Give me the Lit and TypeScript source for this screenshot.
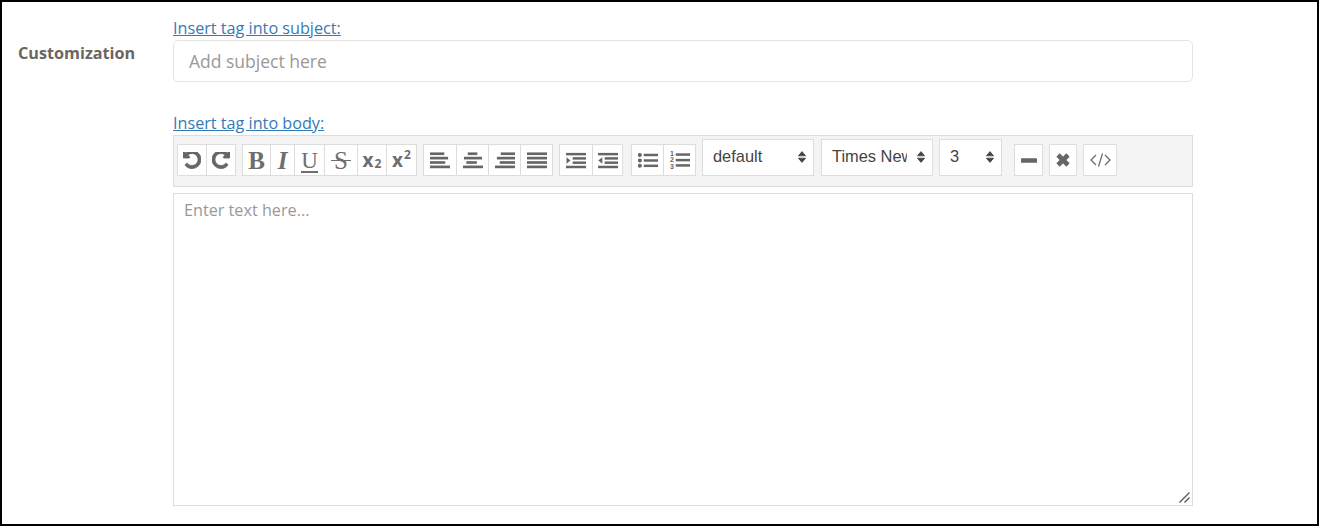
import { LitElement, html, css, svg } from "lit";
import { customElement } from "lit/decorators.js";

const UNDO = "M1536 640q0 156-61 298t-164 245-245 164-298 61q-172 0-327-72.5t-264-204.5q-7-10-6.5-22.5t8.5-20.5l137-138q10-9 25-9 16 2 23 12 73 95 179 147t225 52q104 0 198.5-40.5t163.5-109.5 109.5-163.5 40.5-198.5-40.5-198.5-109.5-163.5-163.5-109.5-198.5-40.5q-98 0-188 35.5t-160 101.5l137 138q31 30 14 69-17 40-59 40h-448q-26 0-45-19t-19-45v-448q0-42 40-59 39-17 69 14l130 129q107-101 244.5-156.5t284.5-55.5q156 0 298 61t245 164 164 245 61 298z";

const bars = (rows: [number, number][], ys = [0, 4.6, 9.2, 13.8]) => html`<svg class="ic" width="20" height="17" viewBox="0 0 21 17">
  ${rows.map(([x, w], i) => svg`<rect x=${x} y=${ys[i]} width=${w} height="2.8"></rect>`)}
</svg>`;

const indent = (left: boolean) => html`<svg class="ic" width="20" height="17" viewBox="0 0 21 17">
  <rect x="0" y="0.5" width="21" height="2.6"></rect>
  <rect x="7" y="5" width="14" height="2.6"></rect>
  <rect x="7" y="9.5" width="14" height="2.6"></rect>
  <rect x="0" y="14" width="21" height="2.6"></rect>
  <path d=${left ? "M4.5 5v7L0.3 8.5z" : "M0.5 5v7L4.7 8.5z"}></path>
</svg>`;

const ul = html`<svg class="ic" width="20" height="17" viewBox="0 0 21 17">
  <circle cx="2" cy="2.6" r="2.1"></circle><circle cx="2" cy="8.5" r="2.1"></circle><circle cx="2" cy="14" r="2.1"></circle>
  <rect x="6" y="1.4" width="15" height="2.6"></rect><rect x="6" y="7.2" width="15" height="2.6"></rect><rect x="6" y="12.8" width="15" height="2.6"></rect>
</svg>`;

const ol = html`<svg class="ic" width="20" height="20" viewBox="0 0 21 20">
  <text x="0" y="6" class="n">1</text><text x="0" y="12.5" class="n">2</text><text x="0" y="19" class="n">3</text>
  <rect x="6" y="3" width="15" height="2.6"></rect><rect x="6" y="8.8" width="15" height="2.6"></rect><rect x="6" y="14.4" width="15" height="2.6"></rect>
</svg>`;

const undo = (flip: boolean) => html`<svg class="ic hist" width="18" height="18" viewBox="0 0 1536 1536"><g transform=${flip ? "translate(1536 0) scale(-1 1)" : ""}><path d=${UNDO}></path></g></svg>`;

const arrows = html`<svg class="arrows" width="8" height="12" viewBox="0 0 8 12"><path d="M4 0.6L7.6 4.8H0.4zM4 11.4L0.4 7.2H7.6z"></path></svg>`;

interface Btn { w: number; c: unknown; }

const groups: { gap: number; items: Btn[] }[] = [
  { gap: 0, items: [
    { w: 30, c: undo(false) },
    { w: 30, c: undo(true) },
  ] },
  { gap: 6, items: [
    { w: 29, c: html`<span class="g b">B</span>` },
    { w: 25, c: html`<span class="g i">I</span>` },
    { w: 31, c: html`<span class="g u">U</span>` },
    { w: 34, c: html`<span class="g s">S</span>` },
    { w: 30, c: html`<span class="x">x<sub>2</sub></span>` },
    { w: 31, c: html`<span class="x">x<sup>2</sup></span>` },
  ] },
  { gap: 6, items: [
    { w: 34, c: bars([[0, 15], [0, 19], [0, 16], [0, 21]]) },
    { w: 33, c: bars([[5, 10], [1, 19], [3.5, 11], [0, 21]]) },
    { w: 33, c: bars([[6, 15], [2, 19], [5, 16], [0, 21]]) },
    { w: 33, c: bars([[0, 21], [0, 21], [0, 21], [0, 21]]) },
  ] },
  { gap: 6, items: [
    { w: 34, c: indent(false) },
    { w: 31, c: indent(true) },
  ] },
  { gap: 8, items: [
    { w: 33, c: ul },
    { w: 33, c: ol },
  ] },
];

const tail: Btn[] = [
  { w: 29, c: html`<svg class="ic" width="16" height="5" viewBox="0 0 16 5"><rect width="16" height="4.4" y="0.3" rx="0.5"></rect></svg>` },
  { w: 28, c: html`<svg class="stroke heavy" width="16" height="16" viewBox="0 0 16 16"><path d="M3 3L13 13M13 3L3 13"></path></svg>` },
  { w: 34, c: html`<svg class="stroke" width="21" height="14" viewBox="0 0 21 14"><path d="M6 2L1 7l5 5M15 2l5 5-5 5M12.5 0.5L8.5 13.5"></path></svg>` },
];

@customElement("app-root")
export class AppRoot extends LitElement {
  static styles = css`
    :host { display: block; font-family: "Open Sans", sans-serif; }
    .frame {
      box-sizing: border-box; width: 1319px; height: 526px; border: 2px solid #000;
      background: #fff; display: flex; padding: 0 0 0 16px;
    }
    .label {
      width: 155px; flex: none; padding-top: 41px; font-size: 16.2px; line-height: 20px;
      font-weight: 700; color: #6b6560;
    }
    .main { width: 1020px; flex: none; display: flex; flex-direction: column; }
    a {
      color: #337ab7; font-size: 16.2px; line-height: 22px; text-decoration: underline; display: block;
    }
    .l1 { margin-top: 15px; height: 23px; }
    .l2 { margin-top: 30px; height: 23px; }
    input {
      box-sizing: border-box; width: 100%; height: 42px; border: 1px solid #e4e4e4; border-radius: 5px;
      padding: 0 15px; font: 17.5px "Open Sans", sans-serif; color: #555; outline: none; background: #fff;
    }
    input::placeholder, textarea::placeholder { color: #999; opacity: 1; }
    .toolbar {
      box-sizing: border-box; height: 52px; background: #f4f4f4; border: 1px solid #ddd;
      display: flex; align-items: flex-start; padding: 8px 0 0 3px; margin-bottom: 6px;
    }
    .group { display: flex; flex: none; }
    button {
      box-sizing: border-box; height: 32px; padding: 0; margin: 0 0 0 -1px; background: #fff; border: 1px solid #ddd;
      display: flex; align-items: center; justify-content: center; color: #6e6e6e; flex: none;
    }
    .group button:first-child { margin-left: 0; }
    .ic { fill: #666; display: block; }
    .hist { stroke: #666; stroke-width: 70; margin-top: 1px; }
    .ic .n { font: 700 7.5px "Liberation Sans", sans-serif; fill: #666; }
    .stroke { fill: none; stroke: #666; stroke-width: 1.2; display: block; }
    .heavy { stroke-width: 4.6; }
    .g { font-family: "Liberation Serif", serif; line-height: 1; position: relative; display: block; }
    .b { font-weight: 700; font-size: 25px; }
    .i { font-style: italic; font-size: 25px; font-weight: 700; }
    .u { font-size: 23px; }
    .u::after {
      content: ""; position: absolute; left: 0; right: 0; bottom: -1px; height: 2px; background: #6e6e6e;
    }
    .s { font-size: 25px; }
    .s::after {
      content: ""; position: absolute; left: -3px; right: -3px; top: 12px; height: 1.5px; background: #6e6e6e;
    }
    .x { font: 700 19px "Open Sans", sans-serif; line-height: 1; display: flex; align-items: center; }
    .x sub, .x sup { font-size: 12px; line-height: 1; margin-left: 1px; }
    .x sub { position: relative; top: 4px; vertical-align: baseline; }
    .x sup { position: relative; top: -5px; vertical-align: baseline; }
    .sel { position: relative; flex: none; height: 37px; margin-top: -5px; }
    .sel select {
      box-sizing: border-box; width: 100%; height: 100%; appearance: none; -webkit-appearance: none;
      border: 1px solid #ddd; background: #fff; padding: 0 25px 4px 10px; border-radius: 0;
      font: 16.4px "Liberation Sans", Arial, sans-serif; color: #444; outline: none;
    }
    .arrows {
      position: absolute; right: 8px; top: 12px; fill: #444; stroke: #444; stroke-width: 0.8;
      stroke-linejoin: round; pointer-events: none;
    }
    .editor { position: relative; width: 1020px; height: 313px; }
    textarea {
      box-sizing: border-box; display: block; width: 100%; height: 100%;
      border: 1px solid #ddd; padding: 5px 10px; margin: 0; resize: none;
      font: 16.2px/22px "Open Sans", sans-serif; color: #555; outline: none; background: #fff;
    }
    .grip { position: absolute; right: 3px; bottom: 3px; stroke: #555; stroke-width: 1.3; fill: none; pointer-events: none; }
  `;

  private btn(b: Btn) {
    return html`<button type="button" style="width:${b.w}px">${b.c}</button>`;
  }

  private select(label: string, w: number, ml: number) {
    return html`<div class="sel" style="width:${w}px;margin-left:${ml}px">
      <select><option>${label}</option></select>${arrows}
    </div>`;
  }

  render() {
    return html`<div class="frame">
      <div class="label">Customization</div>
      <div class="main">
        <a class="l1" href="#">Insert tag into subject:</a>
        <input type="text" placeholder="Add subject here" />
        <a class="l2" href="#">Insert tag into body:</a>
        <div class="toolbar">
          ${groups.map(g => html`<div class="group" style="margin-left:${g.gap}px">${g.items.map(b => this.btn(b))}</div>`)}
          ${this.select("default", 112, 6)}
          ${this.select("Times New Roman", 112, 7)}
          ${this.select("3", 63, 6)}
          <div class="group" style="margin-left:12px">${this.btn(tail[0])}</div>
          <div class="group" style="margin-left:6px">${this.btn(tail[1])}</div>
          <div class="group" style="margin-left:6px">${this.btn(tail[2])}</div>
        </div>
        <div class="editor">
          <textarea placeholder="Enter text here..."></textarea>
          <svg class="grip" width="11" height="11" viewBox="0 0 11 11"><path d="M0.5 10.5L10.5 0.5M5.5 10.5L10.5 5.5"></path></svg>
        </div>
      </div>
    </div>`;
  }
}
